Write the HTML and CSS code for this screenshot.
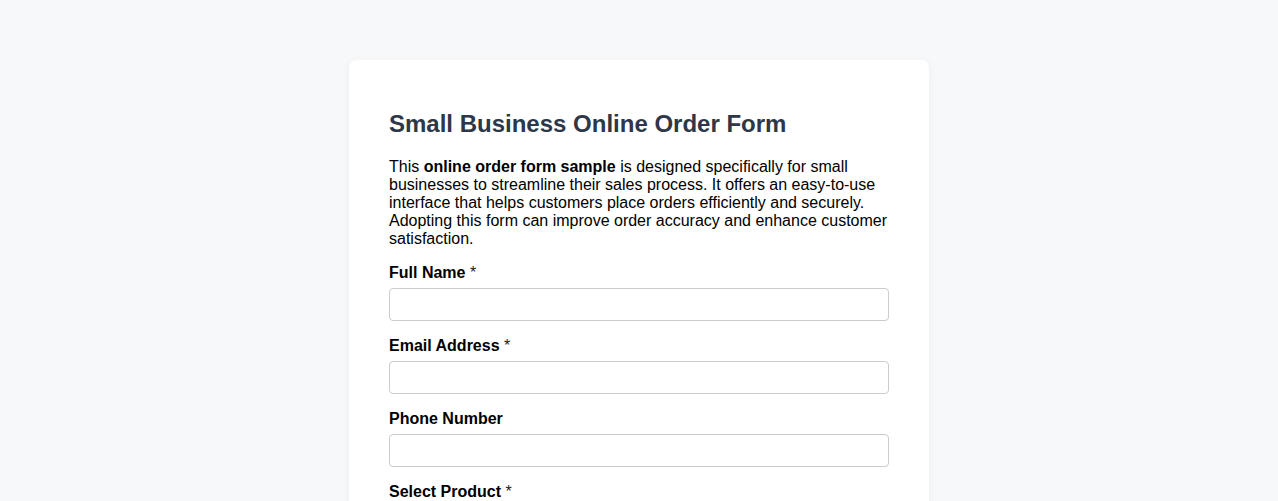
FILE: index.html
```html
<!DOCTYPE html>
<html lang="en">
<head>
<meta charset="utf-8">
<title>Small Business Online Order Form</title>
<link rel="stylesheet" href="styles.css">
</head>
<body>
<div class="card">
  <h1 class="title">Small Business Online Order Form</h1>
  <p class="intro">This <strong>online order form sample</strong> is designed specifically for small businesses to streamline their sales process. It offers an easy-to-use interface that helps customers place orders efficiently and securely. Adopting this form can improve order accuracy and enhance customer satisfaction.</p>
  <form class="form">
    <label class="label" for="name">Full Name <span class="req">*</span></label>
    <input class="input" id="name" type="text">
    <label class="label" for="email">Email Address <span class="req">*</span></label>
    <input class="input" id="email" type="email">
    <label class="label" for="phone">Phone Number</label>
    <input class="input" id="phone" type="tel">
    <label class="label" for="product">Select Product <span class="req">*</span></label>
    <select class="input" id="product"><option></option></select>
  </form>
</div>
</body>
</html>
```
FILE: styles.css
```css
html, body {
  margin: 0;
  padding: 0;
}
body {
  background: #f7f8fa;
  font-family: "Liberation Sans", Arial, sans-serif;
  color: #000;
  padding-top: 60px;
  padding-bottom: 40px;
}
.card {
  width: 500px;
  margin: 0 auto;
  padding: 40px;
  background: #fff;
  border-radius: 8px;
  box-shadow: 0 2px 10px rgba(0, 0, 0, 0.05);
}
.title {
  margin: 10px 0 20px;
  font-size: 24px;
  font-weight: bold;
  color: #2d3748;
  line-height: 27.6px;
}
.intro {
  margin: 0 0 15px;
  font-size: 16px;
  line-height: 18px;
}
.form {
  display: flex;
  flex-direction: column;
}
.label {
  display: block;
  font-size: 16px;
  font-weight: bold;
  line-height: 19px;
  margin-bottom: 6px;
}
.req {
  font-weight: normal;
  color: #222;
}
.input {
  box-sizing: border-box;
  width: 100%;
  height: 33px;
  margin: 0 0 15px;
  border: 1px solid #ccc;
  border-radius: 4px;
  background: #fff;
  font-family: inherit;
  font-size: 14px;
  padding: 6px 8px;
}
```
